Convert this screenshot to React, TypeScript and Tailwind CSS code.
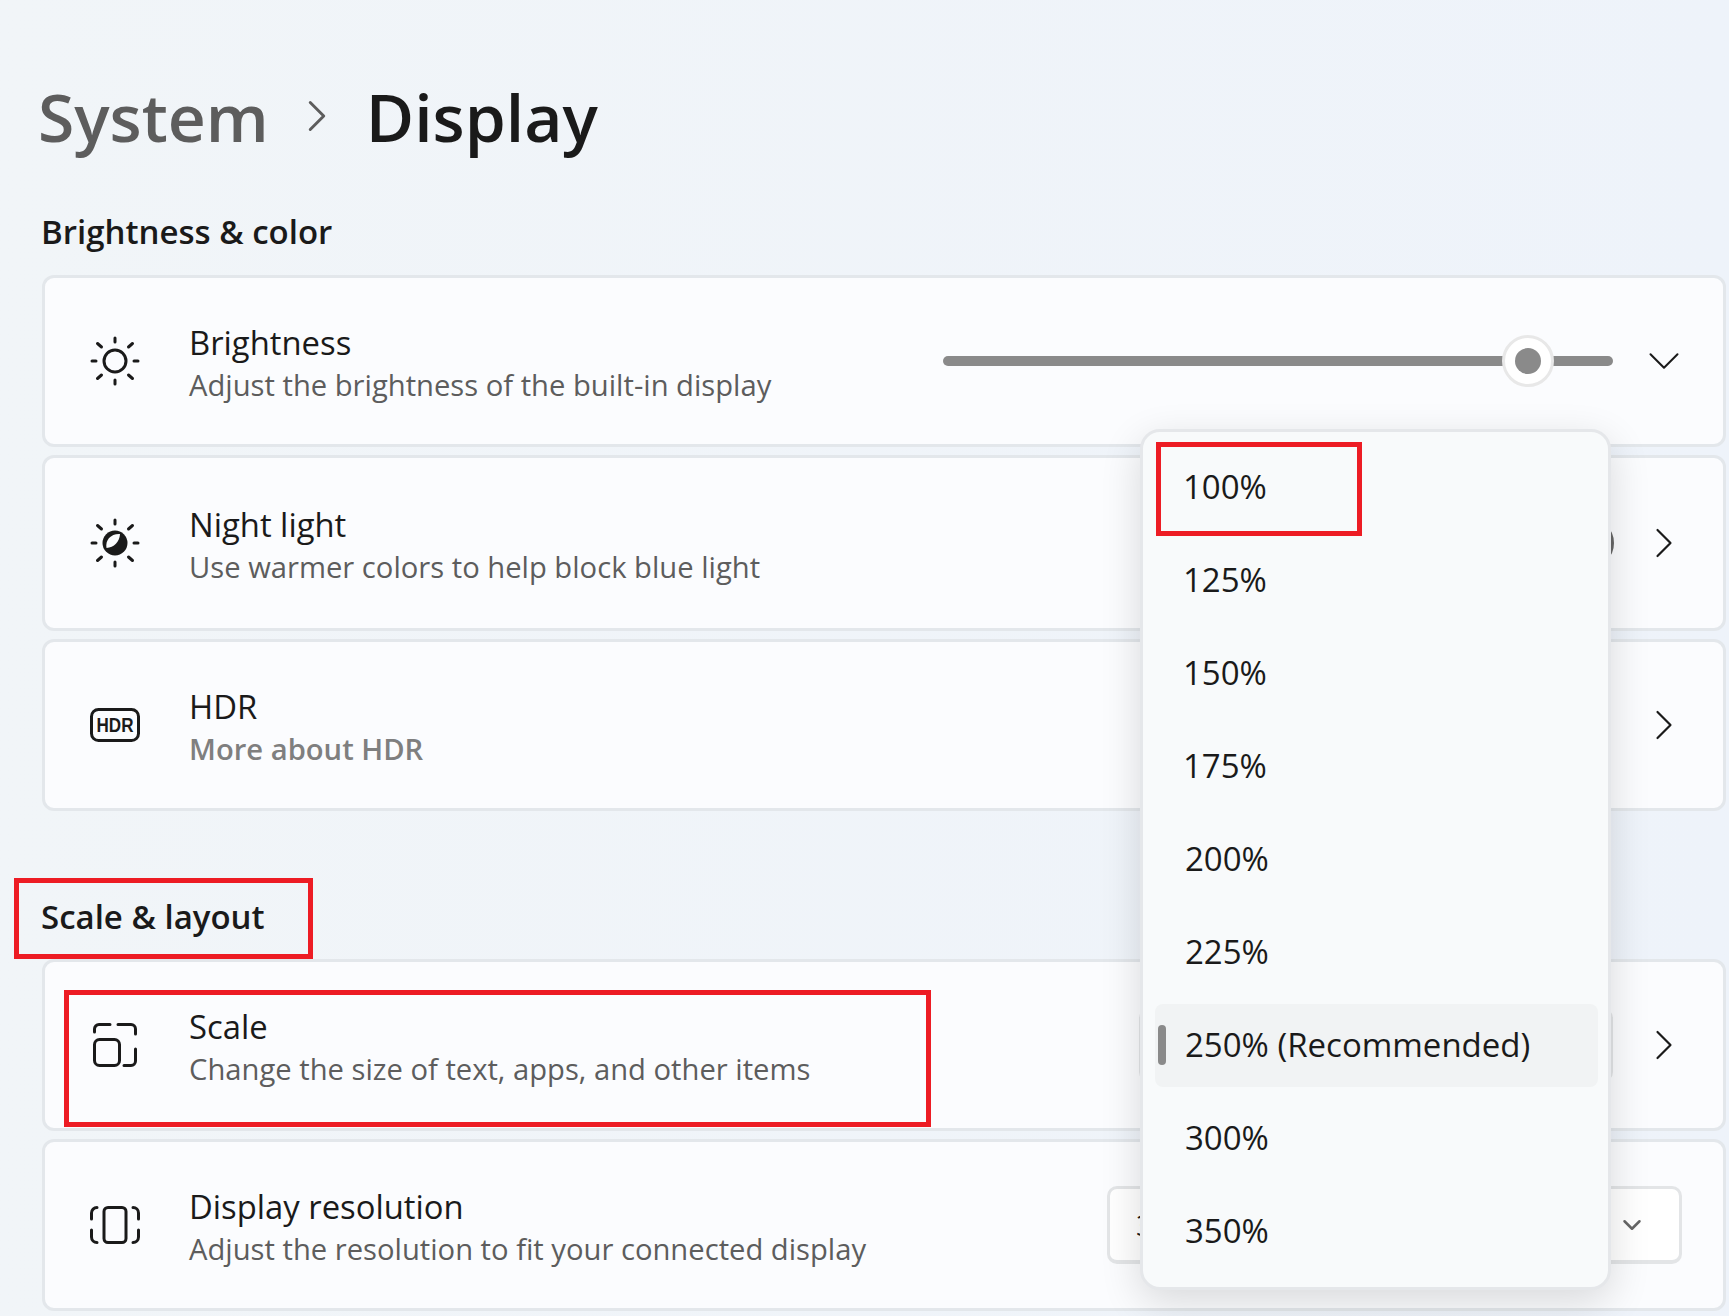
import React from "react";
import { ChevronDown, ChevronRight } from "lucide-react";

function SunRays() {
  return (
    <g stroke="#1a1a1a" strokeWidth="3" strokeLinecap="round">
      <path d="M25 2v4M25 44v4M2 25h4M44 25h4M7.5 7.5l4 3.5M42.5 7.5l-4 3.5M7.5 42.5l4-3.5M42.5 42.5l-4-3.5" />
    </g>
  );
}

function BrightnessIcon() {
  return (
    <svg width="50" height="50" viewBox="0 0 50 50" fill="none">
      <SunRays />
      <circle cx="25" cy="25" r="11" stroke="#1a1a1a" strokeWidth="3" />
    </svg>
  );
}

function NightIcon() {
  return (
    <svg width="50" height="50" viewBox="0 0 50 50" fill="none">
      <SunRays />
      <circle cx="25" cy="25" r="12.500" fill="#1a1a1a" />
      <path d="M16.500 30C15 22 21 15.500 30 16C29.500 24 24 29.500 16.500 30z" fill="#fbfcfe" />
    </svg>
  );
}

function HdrIcon() {
  return (
    <svg width="50" height="34" viewBox="0 0 50 34" fill="none">
      <rect x="1.500" y="1.500" width="47" height="31" rx="7" stroke="#1a1a1a" strokeWidth="3" />
      <text
        x="25"
        y="24"
        textAnchor="middle"
        fontSize="20"
        fontWeight="700"
        fill="#1a1a1a"
        fontFamily="'Liberation Sans', sans-serif"
        textLength="37"
        lengthAdjust="spacingAndGlyphs"
      >
        HDR
      </text>
    </svg>
  );
}

function ScaleIcon() {
  return (
    <svg width="44" height="44" viewBox="0 0 44 44" fill="none" stroke="#1a1a1a" strokeWidth="3" strokeLinecap="round">
      <rect x="1.500" y="16.500" width="25" height="26" rx="5" />
      <path d="M1.500 9V6A4.500 4.500 0 0 1 6 1.500h11M25 1.500h13A4.500 4.500 0 0 1 42.500 6v5M42.500 26v12a4.500 4.500 0 0 1-4.500 4.500h-7" />
    </svg>
  );
}

function ResolutionIcon() {
  return (
    <svg width="50" height="38" viewBox="0 0 50 38" fill="none" stroke="#1a1a1a" strokeWidth="3" strokeLinecap="round">
      <rect x="14" y="1.500" width="22" height="35" rx="4" />
      <path d="M7 1.500A5.500 5.500 0 0 0 1.500 7v6M1.500 24v7A5.500 5.500 0 0 0 7 36.500M43 1.500A5.500 5.500 0 0 1 48.500 7v6M48.500 24v7A5.500 5.500 0 0 1 43 36.500" />
    </svg>
  );
}

function Row({
  icon,
  title,
  desc,
  descClass = "text-[#5d5d5d]",
  height,
  children,
}: {
  icon: React.ReactNode;
  title: string;
  desc: string;
  descClass?: string;
  height: string;
  children?: React.ReactNode;
}) {
  return (
    <div className={`flex items-center rounded-[12px] border-[3px] border-[#e3e7eb] bg-[#fbfcfe] pr-[45px] ${height}`}>
      <div className="flex w-[144px] shrink-0 justify-center pr-[5px]">{icon}</div>
      <div className="flex flex-col pt-[5px]">
        <span className="text-[32.8px] leading-[43px] text-[#1a1a1a]">{title}</span>
        <span className={`text-[29.2px] leading-[43px] ${descClass}`}>{desc}</span>
      </div>
      <div className="ml-auto flex items-center">{children}</div>
    </div>
  );
}

const Next = () => (
  <div className="flex w-[28px] justify-center">
    <ChevronRight size={52} strokeWidth={1} className="shrink-0 text-[#1a1a1a]" />
  </div>
);

const scales = ["100%", "125%", "150%", "175%", "200%", "225%", "250% (Recommended)", "300%", "350%"];

export default function App() {
  return (
    <div className="relative h-[1316px] w-[1729px] overflow-hidden bg-gradient-to-r from-[#f1f5f8] to-[#eef3fa] pl-[42px] pr-[3px] pt-[71px] font-['Open_Sans',sans-serif]">
      <div className="-ml-[4px] flex h-[90px] items-center text-[66px] font-semibold">
        <span className="text-[#5d5d5d]">System</span>
        <ChevronRight size={54} strokeWidth={1.300} className="ml-[21px] mr-[22px] shrink-0 text-[#5d5d5d]" />
        <span className="text-[#1a1a1a]">Display</span>
      </div>

      <h2 className="-ml-[1px] mb-[23px] mt-[51px] text-[33px] font-semibold leading-[40px] text-[#1a1a1a]">Brightness &amp; color</h2>
      <div className="flex flex-col gap-[8px]">
        <Row icon={<BrightnessIcon />} title="Brightness" desc="Adjust the brightness of the built-in display" height="h-[172px]">
          <div className="relative mr-[37px] h-[10px] w-[670px] rounded-full bg-[#8a8a8a]">
            <div className="absolute left-[559px] top-[-21px] flex h-[52px] w-[52px] items-center justify-center rounded-full border-[3px] border-[#e8e8e8] bg-white">
              <div className="h-[26px] w-[26px] rounded-full bg-[#8a8a8a]" />
            </div>
          </div>
          <div className="flex w-[28px] justify-center">
            <ChevronDown size={54} strokeWidth={0.900} className="shrink-0 text-[#1a1a1a]" />
          </div>
        </Row>
        <Row icon={<NightIcon />} title="Night light" desc="Use warmer colors to help block blue light" height="h-[176px]">
          <div className="mr-[36px] h-[50px] w-[100px] rounded-full border-[4px] border-[#666666]" />
          <Next />
        </Row>
        <Row icon={<HdrIcon />} title="HDR" desc="More about HDR" descClass="font-semibold text-[#7f7f7f]" height="h-[172px]">
          <Next />
        </Row>
      </div>

      <h2 className="-ml-[1px] mb-[22px] mt-[86px] text-[33px] font-semibold leading-[40px] text-[#1a1a1a]">Scale &amp; layout</h2>
      <div className="flex flex-col gap-[8px]">
        <Row icon={<ScaleIcon />} title="Scale" desc="Change the size of text, apps, and other items" height="h-[172px]">
          <div className="mr-[37px] h-[74px] w-[474px] rounded-[10px] border-[3px] border-[#e3e5e7] bg-white" />
          <Next />
        </Row>
        <Row icon={<ResolutionIcon />} title="Display resolution" desc="Adjust the resolution to fit your connected display" height="h-[172px]">
          <div className="-mr-[4px] flex h-[78px] w-[575px] items-center justify-between rounded-[10px] border-[3px] border-b-[4px] border-[#e3e5e7] bg-white pl-[26px] pr-[32px]">
            <span className="text-[29px] text-[#1a1a1a]">3</span>
            <ChevronDown size={30} strokeWidth={2} className="text-[#666666]" />
          </div>
        </Row>
      </div>

      {/* flyout */}
      <div className="absolute left-[1140px] top-[429px] h-[861px] w-[471px] rounded-[20px] border-[3px] border-[#e5e7ea] bg-[#f8fafb] pt-[9px] shadow-[0_12px_40px_rgba(0,0,0,0.14)]">
        {scales.map((s, i) => (
          <div key={s} className="flex h-[93px] items-center pl-[12px] pr-[10px]">
            <div className={`relative flex h-[83px] w-full items-center rounded-[8px] pb-[2px] text-[33px] text-[#1a1a1a] ${i < 4 ? "pl-[28px]" : "pl-[30px]"} ${i === 6 ? "bg-[#f1f3f4]" : ""}`}>
              {i === 6 && <div className="absolute left-[3px] top-[21px] h-[40px] w-[8px] rounded-full bg-[#8a8a8a]" />}
              {s}
            </div>
          </div>
        ))}
      </div>

      {/* red callouts */}
      <div className="absolute left-[14px] top-[878px] h-[81px] w-[299px] border-[5px] border-[#ed1c24]" />
      <div className="absolute left-[64px] top-[990px] h-[137px] w-[867px] border-[5px] border-[#ed1c24]" />
      <div className="absolute left-[1156px] top-[442px] h-[94px] w-[206px] border-[5px] border-[#ed1c24]" />
    </div>
  );
}
